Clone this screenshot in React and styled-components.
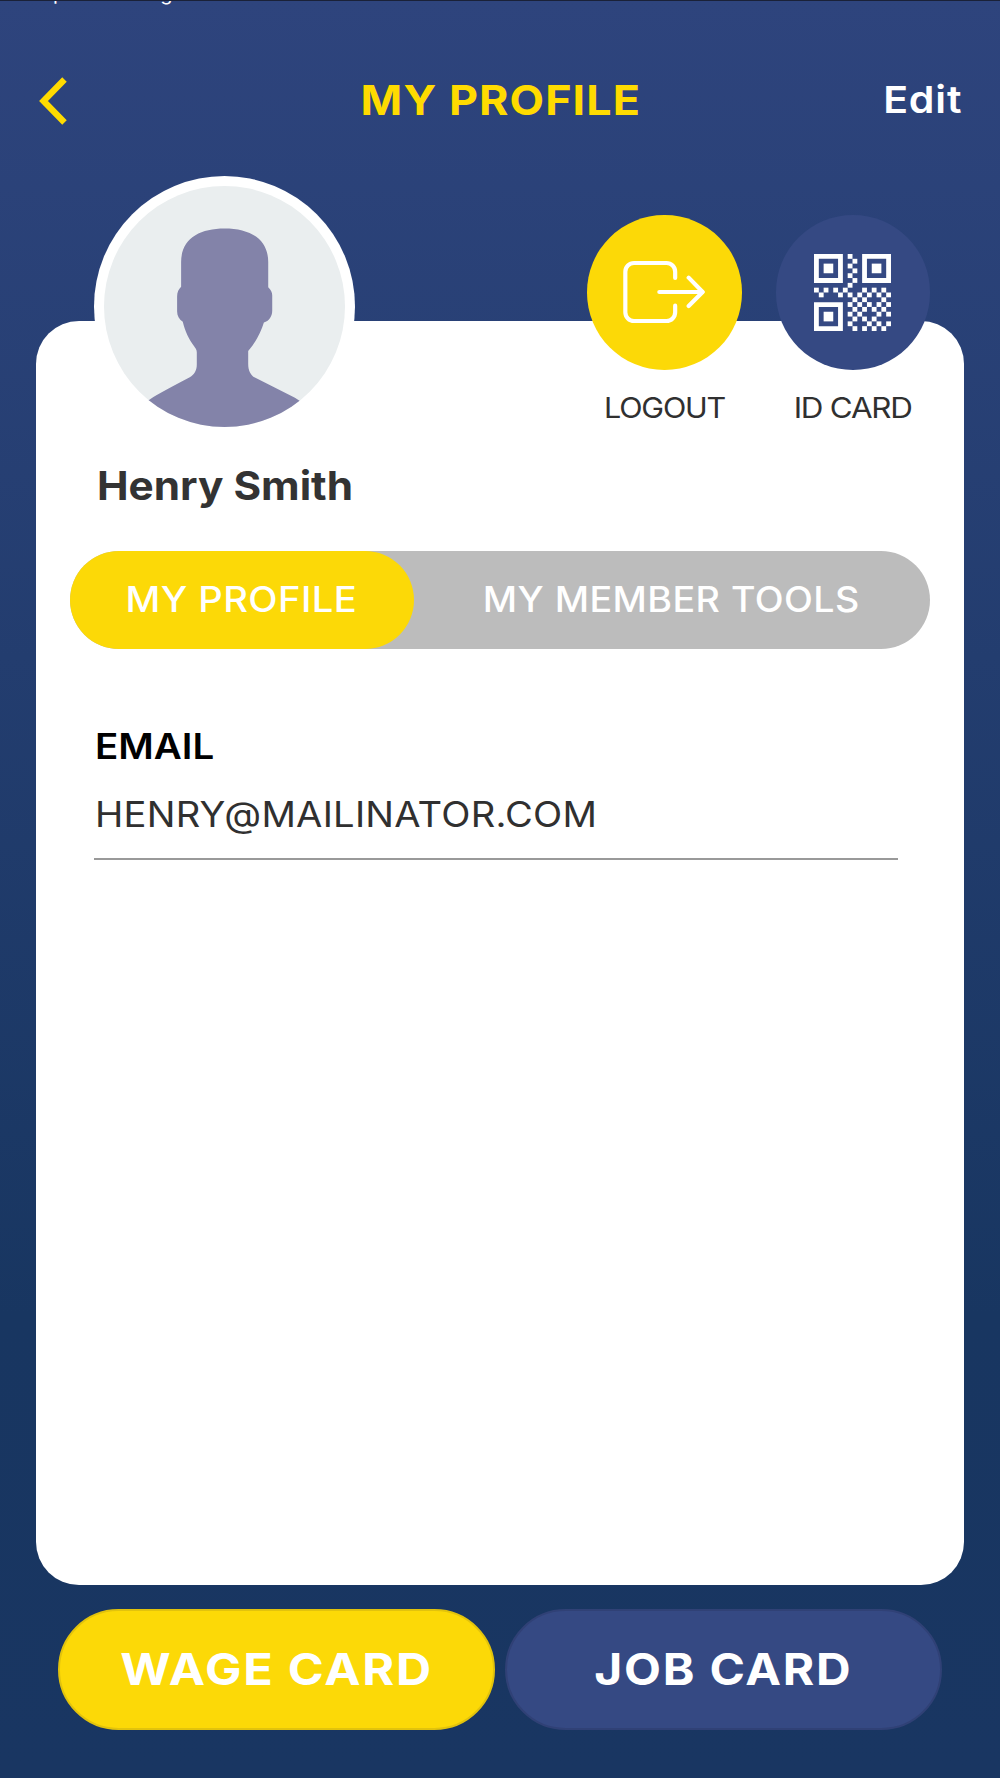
import * as React from 'react';
import styled, { createGlobalStyle } from 'styled-components';

const GlobalStyle = createGlobalStyle`
    * {
        box-sizing: border-box;
    }

    body {
        margin: 0;
        font-family: Inter, "Open Sans", sans-serif;
    }

    button {
        font-family: inherit;
        padding: 0;
        border: none;
        outline: none;
        background: transparent;
        cursor: pointer;
    }
`;

const Screen = styled.div`
    width: 1000px;
    height: 1778px;
    display: flex;
    flex-direction: column;
    overflow: hidden;
    background: linear-gradient(180deg, #2e447d 0%, #183661 74%, #193662 100%);
`;

const Wide = styled.span`
    display: inline-block;
    transform: scaleX(${props => props.$scale});
    transform-origin: ${props => props.$origin || 'center'};
`;

const StatusStrip = styled.div`
    display: flex;
    align-items: flex-end;
    gap: 95px;
    height: 5px;
    padding-left: 53px;
    overflow: hidden;
    border-top: 1px solid #1a2138;
    color: #ffffff;
    font-size: 20px;
    line-height: 24px;
`;

const Header = styled.header`
    display: grid;
    grid-template-columns: 200px 1fr 200px;
    align-items: center;
    height: 190px;
    padding: 0 38px 0 39px;
`;

const BackButton = styled.button`
    display: flex;
    width: 30px;
    height: 50px;
    margin-top: 1px;
`;

const Title = styled.h1`
    margin: 0;
    color: #ffdb00;
    font-size: 41.5px;
    font-weight: 700;
    line-height: 50px;
    letter-spacing: 1px;
    text-align: center;
    white-space: nowrap;
`;

const EditButton = styled.button`
    justify-self: end;
    padding-bottom: 1px;
    color: #ffffff;
    font-size: 37.5px;
    font-weight: 600;
    line-height: 46px;
    letter-spacing: 0.8px;
`;

const Card = styled.main`
    width: 928px;
    height: 1263.5px;
    margin: 126px auto 0;
    border-radius: 43px;
    background: #ffffff;
`;

const Hero = styled.section`
    display: flex;
    justify-content: space-between;
    align-items: flex-start;
    padding: 0 34px 0 58px;
`;

const Person = styled.div`
    margin-top: -145px;
`;

const Avatar = styled.div`
    display: flex;
    width: 261px;
    height: 261px;
    padding: 10px;
    border-radius: 50%;
    background: #ffffff;
`;

const Name = styled.h2`
    margin: 25px 0 0 3px;
    color: #333333;
    font-size: 39.5px;
    font-weight: 700;
    line-height: 48px;
    white-space: nowrap;
`;

const Actions = styled.div`
    display: flex;
    gap: 34px;
    margin-top: -106px;
`;

const Action = styled.button`
    display: flex;
    flex-direction: column;
    align-items: center;
    width: 154.5px;
`;

const ActionCircle = styled.span`
    display: flex;
    align-items: center;
    justify-content: center;
    width: 154.5px;
    height: 154.5px;
    border-radius: 50%;
    background: ${props => props.$color};
`;

const ActionLabel = styled.span`
    margin-top: 21.5px;
    color: #303030;
    font-size: 28px;
    line-height: 34px;
    letter-spacing: -1.1px;
    white-space: nowrap;
`;

const Tabs = styled.nav`
    display: flex;
    height: 97.5px;
    margin: 41px 34px 0;
    border-radius: 49px;
    background: #bcbcbc;
`;

const Tab = styled.button`
    flex: ${props => props.$active ? '0 0 343.5px' : '1'};
    padding-bottom: 2px;
    border-radius: 49px;
    background: ${props => props.$active ? '#fcd907' : 'transparent'};
    color: #ffffff;
    font-size: 35px;
    font-weight: 500;
    letter-spacing: 0.4px;
    white-space: nowrap;
`;

const Field = styled.div`
    margin: 75px 66px 0 58px;
    border-bottom: 2px solid #999999;
`;

const FieldLabel = styled.div`
    padding-left: 1px;
    color: #000000;
    font-size: 35px;
    font-weight: 600;
    line-height: 44px;
`;

const FieldValue = styled.div`
    margin-top: 24px;
    padding: 0 0 22px 1px;
    color: #303030;
    font-size: 35px;
    line-height: 44px;
    letter-spacing: 0.2px;
`;

const Footer = styled.footer`
    display: flex;
    gap: 10px;
    padding: 24.5px 58px 0;
`;

const CardButton = styled.button`
    flex: 1;
    height: 121px;
    padding-bottom: 2px;
    border: 2.5px solid ${props => props.$border};
    border-radius: 61px;
    background: ${props => props.$color};
    color: #ffffff;
    font-size: 44px;
    font-weight: 700;
    letter-spacing: 1.6px;
`;

// 16 x 16 modules, finder squares are drawn apart
const QR_MODULES = [
    '.......#........',
    '........#.......',
    '.......#........',
    '........#.......',
    '.......#........',
    '........#.......',
    '.......#........',
    '#.#.#.#...#.#.#.',
    '.#...#.#.#.#.#.#',
    '........#.#...#.',
    '.......#.#.#.#.#',
    '........#.#.#.#.',
    '.......#.#...#.#',
    '........#.#.#...',
    '.......#...#.#.#',
    '........#.#.#.#.'
];

const QR_FINDERS = [[0, 0], [10, 0], [0, 10]];

function BackIcon()
{
    return(
        <svg width="30" height="50" viewBox="0 0 30 50">
            <path d="M25.5 3.500 L4.500 25 L25.5 46.500" fill="none" stroke="#ffdb00" strokeWidth="6.3" />
        </svg>
    );
}

function PersonIcon()
{
    return(
        <svg width="241" height="241" viewBox="73 77 722 722">
            <defs>
                <clipPath id="face">
                    <circle cx="434" cy="438" r="361" />
                </clipPath>
            </defs>
            <circle cx="434" cy="438" r="361" fill="#eaeeef" />
            <path
                clipPath="url(#face)"
                fill="#8383a9"
                d="M434 204 C510 204 565 235 565 305 V380 C573 388 577 395 577 405 V450 C577 468 567 482 552 486 C543 515 528 545 505 571 V610 C505 632 513 643 525 651 L645 711 L720 760 V820 H150 V755 L209 717 Q225 705 330 650 C343 643 351 630 351 612 V575 C351 565 346 562 343 557 C327 537 315 510 309 484 C298 476 292 466 292 452 V408 C292 395 297 386 304 379 V305 C304 235 358 204 434 204 Z"
            />
        </svg>
    );
}

function LogoutIcon()
{
    return(
        <svg width="82" height="64" viewBox="160 181 246 192" fill="none" stroke="#ffffff" strokeWidth="12.5" strokeLinecap="round" strokeLinejoin="round">
            <path d="M316.500 235 V216 A26 26 0 0 0 290.500 190 H193 A26 26 0 0 0 167 216 V338 A26 26 0 0 0 193 364 H290.500 A26 26 0 0 0 316.500 338 V318" />
            <path d="M269 277 H398" />
            <path d="M357 234 L399 277 L357 319" />
        </svg>
    );
}

function QrIcon()
{
    return(
        <svg width="77" height="77" viewBox="0 0 16 16" fill="#ffffff">
            {QR_FINDERS.map(([x, y]) => (
                <g key={x + '-' + y}>
                    <path fillRule="evenodd" d={`M${x} ${y} h6 v6 h-6 Z M${x + 1} ${y + 1} v4 h4 v-4 Z`} />
                    <rect x={x + 2} y={y + 2} width="2" height="2" />
                </g>
            ))}
            {QR_MODULES.map((row, y) => row.split('').map((cell, x) => (
                cell == '#' ? <rect key={x + '-' + y} x={x} y={y} width="1" height="1" /> : null
            )))}
        </svg>
    );
}

export default class App extends React.Component
{
    constructor(props)
    {
        super(props);

        this.state = {
            tab: "profile" // profile, tools
        }
    }

    setTab(tab){
        this.setState({
            tab: tab
        })
    }

    render()
    {
        return(
            <Screen>
                <GlobalStyle />
                <StatusStrip>
                    <span>p</span>
                    <span>g</span>
                </StatusStrip>
                <Header>
                    <BackButton aria-label="Back">
                        <BackIcon />
                    </BackButton>
                    <Title><Wide $scale={1.08}>MY PROFILE</Wide></Title>
                    <EditButton><Wide $scale={1.095} $origin="right">Edit</Wide></EditButton>
                </Header>
                <Card>
                    <Hero>
                        <Person>
                            <Avatar>
                                <PersonIcon />
                            </Avatar>
                            <Name><Wide $scale={1.07} $origin="left">Henry Smith</Wide></Name>
                        </Person>
                        <Actions>
                            <Action>
                                <ActionCircle $color="#fcd907">
                                    <LogoutIcon />
                                </ActionCircle>
                                <ActionLabel><Wide $scale={1.09}>LOGOUT</Wide></ActionLabel>
                            </Action>
                            <Action>
                                <ActionCircle $color="#354983">
                                    <QrIcon />
                                </ActionCircle>
                                <ActionLabel><Wide $scale={1.12}>ID CARD</Wide></ActionLabel>
                            </Action>
                        </Actions>
                    </Hero>
                    <Tabs>
                        <Tab $active={this.state.tab == "profile"} onClick={() => this.setTab("profile")}>
                            <Wide $scale={1.09}>MY PROFILE</Wide>
                        </Tab>
                        <Tab $active={this.state.tab == "tools"} onClick={() => this.setTab("tools")}>
                            <Wide $scale={1.075}>MY MEMBER TOOLS</Wide>
                        </Tab>
                    </Tabs>
                    <Field>
                        <FieldLabel><Wide $scale={1.1} $origin="left">EMAIL</Wide></FieldLabel>
                        <FieldValue><Wide $scale={1.09} $origin="left">HENRY@MAILINATOR.COM</Wide></FieldValue>
                    </Field>
                </Card>
                <Footer>
                    <CardButton $color="#fcd907" $border="#e2c30c"><Wide $scale={1.105}>WAGE CARD</Wide></CardButton>
                    <CardButton $color="#354983" $border="#304176"><Wide $scale={1.09}>JOB CARD</Wide></CardButton>
                </Footer>
            </Screen>
        );
    }
}
